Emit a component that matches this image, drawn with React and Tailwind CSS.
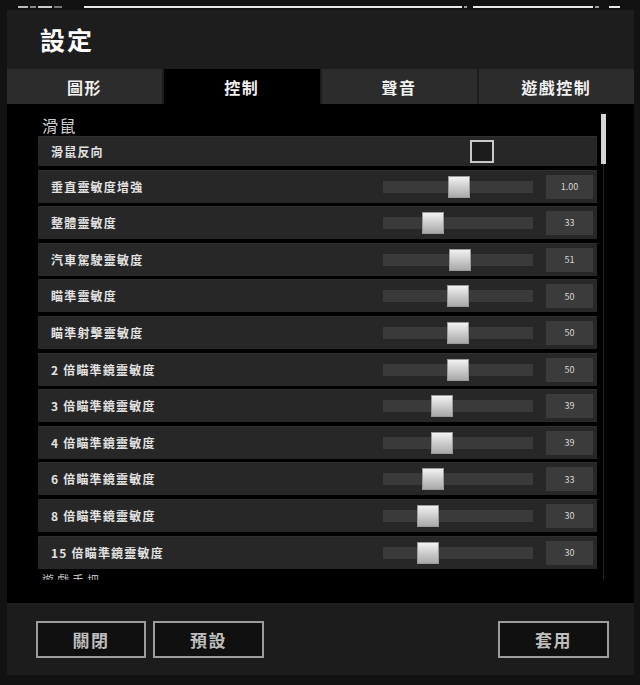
import React from "react";

const rows = [
  { label: "垂直靈敏度增強", pos: 50.7, value: "1.00" },
  { label: "整體靈敏度", pos: 33, value: "33" },
  { label: "汽車駕駛靈敏度", pos: 51, value: "51" },
  { label: "瞄準靈敏度", pos: 50, value: "50" },
  { label: "瞄準射擊靈敏度", pos: 50, value: "50" },
  { label: "2 倍瞄準鏡靈敏度", pos: 50, value: "50" },
  { label: "3 倍瞄準鏡靈敏度", pos: 39, value: "39" },
  { label: "4 倍瞄準鏡靈敏度", pos: 39, value: "39" },
  { label: "6 倍瞄準鏡靈敏度", pos: 33, value: "33" },
  { label: "8 倍瞄準鏡靈敏度", pos: 30, value: "30" },
  { label: "15 倍瞄準鏡靈敏度", pos: 30, value: "30" },
];

const font = { fontFamily: '"Noto Sans CJK TC", "Noto Sans", sans-serif' };

function SliderRow({ label, pos, value }) {
  return (
    <div className="flex h-[33px] shrink-0 items-center bg-[#272727] border-t border-[#2f2f2f]">
      <div className="flex-1 pl-[13px] text-[12px] font-bold tracking-[1.2px] text-[#e2e2e2]">
        {label}
      </div>
      <div className="relative h-[12px] w-[150px] bg-[#3a3a3a]">
        <div
          className="absolute top-[-5px] h-[22px] w-[22px] border border-[#9a9a9a] bg-gradient-to-b from-[#f2f2f2] to-[#a9a9a9]"
          style={{ left: `${pos * 1.5 - 11}px` }}
        />
      </div>
      <div className="ml-[13px] mr-[4px] flex h-[24px] w-[47px] items-center justify-center bg-[#3b3b3b] text-[9px] text-[#d8d8d8]">
        {value}
      </div>
    </div>
  );
}

export default function App() {
  const tabs = ["圖形", "控制", "聲音", "遊戲控制"];
  return (
    <div className="relative h-[685px] w-[640px] overflow-hidden bg-[#121212]" style={font}>
      {/* top decorative line */}
      <div className="flex h-[8px] items-end pl-[18px] pr-[14px]">
        <div className="flex h-[2px] w-full gap-[2px]">
          <div className="h-full w-[10px] bg-[#bbbbbb]" />
          <div className="h-full w-[6px] bg-[#888888]" />
          <div className="h-full w-[14px] bg-[#cccccc]" />
          <div className="h-full w-[8px] bg-[#777777]" />
          <div className="ml-[20px] h-full w-[378px] bg-[#e8e8e8]" />
          <div className="h-full w-[3px] bg-[#999999]" />
          <div className="ml-[4px] h-full w-[120px] bg-[#e8e8e8]" />
          <div className="h-full w-[4px] bg-[#999999]" />
          <div className="ml-[8px] h-full w-[11px] bg-[#e8e8e8]" />
        </div>
      </div>

      <div className="ml-[7px] mt-[2px] w-[627px]">
        {/* title */}
        <div className="flex h-[59px] items-center bg-[#1d1d1d] pl-[33px]">
          <span className="text-[25px] font-bold tracking-[2px] text-white">設定</span>
        </div>

        {/* tabs */}
        <div className="grid h-[35px] grid-cols-4 gap-[2px] bg-[#1d1d1d]">
          {tabs.map((t, i) => (
            <div
              key={t}
              className={
                "flex items-center justify-center text-[16px] font-bold tracking-[1.5px] text-[#f0f0f0] " +
                (i === 1 ? "bg-black" : "bg-[#2c2c2c]")
              }
            >
              {t}
            </div>
          ))}
        </div>

        {/* content */}
        <div className="h-[499px] bg-black">
          <div className="flex h-[476px] overflow-hidden">
            <div className="ml-[31px] flex w-[559px] flex-col">
              <div className="mt-[10px] h-[22px] pl-[4px] text-[16px] leading-[22px] tracking-[1.5px] text-[#d0d0d0]">
                滑鼠
              </div>
              <div className="flex h-[30px] shrink-0 items-center bg-[#272727] border-t border-[#2f2f2f]">
                <div className="flex-1 pl-[13px] text-[12px] font-bold tracking-[1.2px] text-[#e2e2e2]">
                  滑鼠反向
                </div>
                <div className="mr-[103px] h-[23px] w-[24px] border-2 border-[#c8c8c8] bg-[#1c1c1c]" />
              </div>
              <div className="mt-[3.6px] flex flex-col gap-[3.6px]">
                {rows.map((r) => (
                  <SliderRow key={r.label} {...r} />
                ))}
              </div>
              <div className="mt-[3px] h-[16px] shrink-0 pl-[4px] text-[12px] leading-[16px] tracking-[3px] text-[#bbbbbb]">
                遊戲手把
              </div>
            </div>
            <div className="ml-[4px] flex w-[5px] flex-col items-center pt-[10px]">
              <div className="h-[50px] w-[5px] bg-[#d4d4d4]" />
              <div className="w-[1px] flex-1 bg-[#262626]" />
            </div>
          </div>
        </div>

        {/* footer */}
        <div className="flex h-[72px] items-start bg-[#1c1c1c] pt-[18px] pl-[29px] pr-[25px]">
          <div className="flex h-[37px] w-[110px] items-center justify-center border-2 border-[#9c9c9c] bg-[#101010] text-[17px] font-bold tracking-[1.5px] text-[#bdbdbd]">
            關閉
          </div>
          <div className="ml-[7px] flex h-[37px] w-[111px] items-center justify-center border-2 border-[#9c9c9c] bg-[#101010] text-[17px] font-bold tracking-[1.5px] text-[#bdbdbd]">
            預設
          </div>
          <div className="ml-auto flex h-[37px] w-[111px] items-center justify-center border-2 border-[#9c9c9c] bg-[#101010] text-[17px] font-bold tracking-[1.5px] text-[#bdbdbd]">
            套用
          </div>
        </div>
      </div>
    </div>
  );
}
